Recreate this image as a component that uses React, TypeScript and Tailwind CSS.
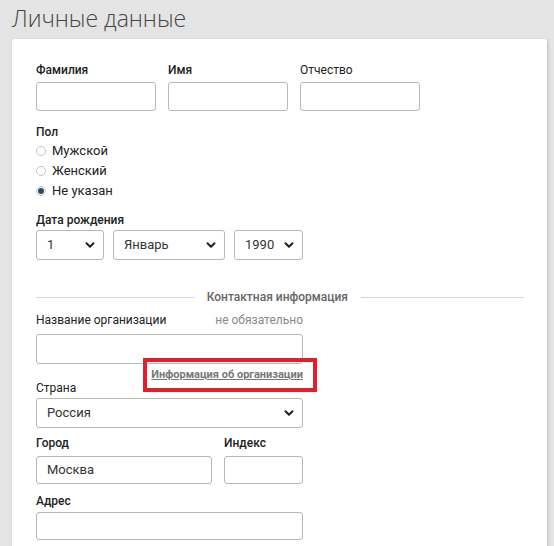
import React from 'react';
import { ChevronDown } from 'lucide-react';

const font = { fontFamily: 'Roboto, "Liberation Sans", Arial, sans-serif' };

const Label: React.FC<{ children: React.ReactNode; className?: string }> = ({ children, className = '' }) => (
  <div className={`text-[12px] leading-[14px] font-medium text-[#222] ${className}`}>{children}</div>
);

const Input: React.FC<{ w: string; h?: string; value?: string }> = ({ w, h = 'h-[29px]', value }) => (
  <div className={`${w} ${h} border border-[#b8b8b8] rounded-[3px] bg-white flex items-center px-[10px] text-[13px] text-[#333]`}>
    {value}
  </div>
);

const Select: React.FC<{ w: string; value: string }> = ({ w, value }) => (
  <div className={`${w} h-[30px] border border-[#b8b8b8] rounded-[3px] bg-white flex items-center justify-between pl-[10px] pr-[6px] text-[13px] text-[#333]`}>
    <span>{value}</span>
    <ChevronDown size={14} strokeWidth={3.4} className="text-[#222]" />
  </div>
);

const Radio: React.FC<{ label: string; checked?: boolean }> = ({ label, checked }) => (
  <div className="flex items-center gap-[6px] h-[20px] text-[13px] text-[#222]">
    <span className="w-[10px] h-[10px] rounded-full border border-[#c4c4c4] bg-white flex items-center justify-center">
      {checked && <span className="w-[6px] h-[6px] rounded-full bg-[#274a6d]" />}
    </span>
    <span>{label}</span>
  </div>
);

export default function App() {
  return (
    <div className="min-h-screen bg-[#e4e4e4] px-[12px] overflow-hidden" style={font}>
      <h1
        className="h-[39px] pt-[3px] text-[23px] leading-[30px] font-light text-[#444]"
        style={{ fontFamily: '"Open Sans", Roboto, sans-serif', fontWeight: 300 }}
      >
        Личные данные
      </h1>

      <div className="bg-white rounded-[3px] shadow-[1px_1px_3px_rgba(0,0,0,0.18)] w-[535px] pl-[24px] pr-[22px] pt-[24px] pb-[10px]">
        <div className="flex gap-[12px]">
          {['Фамилия', 'Имя', 'Отчество'].map(l => (
            <div key={l}>
              <Label className={`mb-[5px] ${l === 'Отчество' ? 'font-normal' : ''}`}>{l}</Label>
              <Input w="w-[120px]" />
            </div>
          ))}
        </div>

        <Label className="mt-[14px] mb-[2px]">Пол</Label>
        <Radio label="Мужской" />
        <Radio label="Женский" />
        <Radio label="Не указан" checked />

        <Label className="mt-[12px] mb-[3px]">Дата рождения</Label>
        <div className="flex gap-[9px]">
          <Select w="w-[68px]" value="1" />
          <Select w="w-[112px]" value="Январь" />
          <Select w="w-[69px]" value="1990" />
        </div>

        {/* Contacts divider */}
        <div className="flex items-center mt-[30px] w-[488px]">
          <div className="flex-1 h-px bg-[#d6d6d6]" />
          <div className="px-[13px] text-[12px] leading-[14px] font-medium text-[#666]">Контактная информация</div>
          <div className="w-[163px] h-px bg-[#d6d6d6]" />
        </div>

        <div className="w-[267px]">
          <div className="flex justify-between items-center mt-[9px] mb-[7px]">
            <Label className="font-normal">Название организации</Label>
            <span className="text-[12px] leading-[14px] text-[#888]">не обязательно</span>
          </div>
          <Input w="w-full" h="h-[30px]" />

          <div className="relative text-right mt-[4px] h-[14px] text-[11px] leading-[14px]">
            <a className="font-bold text-[#777] underline">Информация об организации</a>
            <div className="absolute left-[107px] top-[-10px] w-[174px] h-[34px] border-[4px] border-[#df1f2a]" />
          </div>

          <Label className="font-normal mt-[-1px] mb-[3px]">Страна</Label>
          <Select w="w-full" value="Россия" />

          <div className="flex gap-[12px] mt-[8px]">
            <div>
              <Label className="mb-[6px]">Город</Label>
              <Input w="w-[176px]" h="h-[28px]" value="Москва" />
            </div>
            <div>
              <Label className="mb-[6px]">Индекс</Label>
              <Input w="w-[79px]" h="h-[28px]" />
            </div>
          </div>

          <Label className="mt-[10px] mb-[4px]">Адрес</Label>
          <Input w="w-full" h="h-[28px]" />
        </div>
      </div>
    </div>
  );
}
